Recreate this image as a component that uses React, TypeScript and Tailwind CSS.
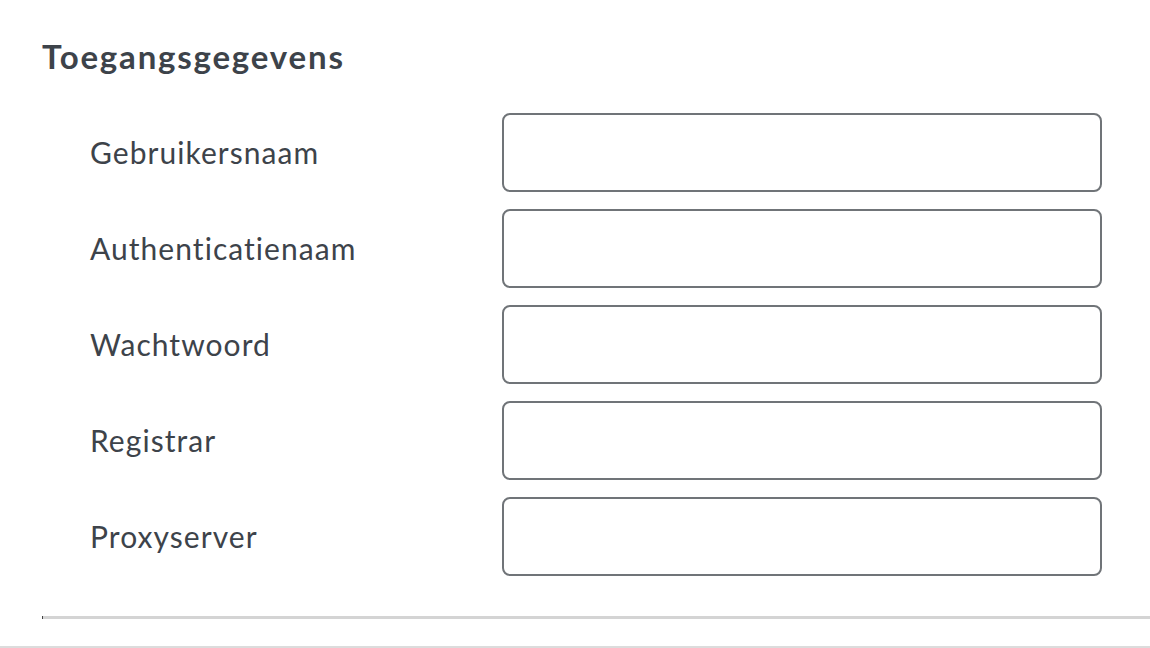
const fields = ["Gebruikersnaam", "Authenticatienaam", "Wachtwoord", "Registrar", "Proxyserver"];

export default function App() {
  return (
    <div className="h-[648px] w-[1150px] overflow-hidden bg-white font-['Lato','Noto_Sans',sans-serif] text-[#3d434a]">
      <div className="pl-[42px] pt-[36px]">
        <h2 className="text-[33px] font-bold leading-[40px] tracking-[0.055em]">Toegangsgegevens</h2>
        <div className="mt-[37px] flex flex-col gap-[17px]">
          {fields.map((f) => (
            <div key={f} className="flex items-center">
              <label className="w-[460px] pl-[48px] text-[30px] tracking-[0.035em]">{f}</label>
              <input
                type="text"
                className="h-[79px] w-[600px] rounded-[8px] border-2 border-[#707478] bg-white outline-none"
              />
            </div>
          ))}
        </div>
        <div className="mt-[40px] flex h-[3px]">
          <div className="w-px bg-[#444]" />
          <div className="flex-1 bg-[#d4d4d4]" />
        </div>
      </div>
      <div className="mt-[27px] h-[2px] bg-[#dcdcdc]" />
    </div>
  );
}
